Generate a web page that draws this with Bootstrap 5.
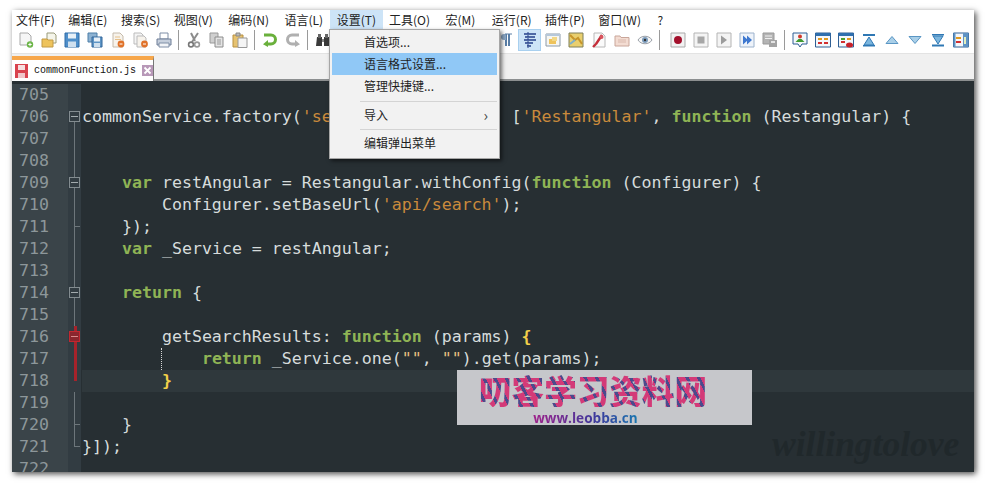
<!DOCTYPE html>
<html lang="zh">
<head>
<meta charset="utf-8">
<title>commonFunction.js</title>
<link rel="stylesheet" href="https://cdn.jsdelivr.net/npm/bootstrap@5.3.0/dist/css/bootstrap.min.css">
<style>
html,body{height:483px;overflow:hidden;background:#fff}
body{padding:10px 11px 11px 12px}
.np-win{position:relative;height:462px;background:#f0f0f0;box-shadow:2px 2px 6px rgba(0,0,0,.7)}
.np-menu{height:19px;background:#fff;padding-left:3px;font:12px/19px "Noto Sans CJK SC","Liberation Sans",sans-serif;color:#222}
.np-menu span{padding:0 7px 0 1px;margin-right:5.5px;white-space:nowrap}
.np-menu span.w2{margin-right:7.5px}
.np-menu span.w3{margin-right:8.5px}
.np-menu span.on{background:#cde4f7;padding:0 7px 0 7px;margin:0 5px 0 -6px}
.np-tools{height:25px;background:#fff;border-bottom:1px solid #e3e3e3;padding-left:2px}
.np-cell{width:23px;height:22px;padding:3px 3.5px;flex:none}
.np-cell svg{display:block;width:16px;height:16px}
.np-cell.on{background:#cde4f7;outline:1px solid #a9d0ef;outline-offset:-1px}
.np-sep{width:7px;height:22px;flex:none;position:relative}
.np-sep::after{content:"";display:block;width:1px;height:20px;margin:1px 0 0 3px;background:#9a9a9a}
.np-sep.wide{width:10px}
.np-tabs{height:27px;background:#f0f0f0;padding-top:2px;border-bottom:2px solid #8c8f90}
.np-tab{width:142px;height:25px;background:#fff;border-right:1px solid #777;border-top:4px solid #f7a74b;padding-left:3px;gap:6px;font:10px/20px "Liberation Mono",monospace;color:#111}
.np-tab svg{flex:none;display:block}
.np-editor{height:391px;padding-top:3px;background:#272f33;overflow:hidden;font:16.6px/22px "DejaVu Sans Mono",monospace;color:#d6dcdc}
.np-line{height:22px;white-space:pre}
.np-num{width:56px;flex:none;background:#3a4449;color:#8d979a;padding-left:7px}
.np-fold{width:13px;flex:none;background:#323c42;position:relative;margin-right:2px}
.np-code{flex:1 1 auto;position:relative;margin-left:-1px}
.np-line.cur .np-code{background:#2f383c}
.k{color:#8fb455;font-weight:700}
.s{color:#c98a3c}
.b{color:#f2cf4a;font-weight:700}
.q{color:#e8c080}
.f-box::before{content:"";position:absolute;left:1px;top:5px;width:11px;height:11px;border:1px solid #838c90;background:#323c42;z-index:1}
.f-box::after{content:"";position:absolute;left:3px;top:10px;width:7px;height:1px;background:#a3abae;z-index:1}
.f-v i{position:absolute;left:6px;top:0;bottom:0;width:1px;background:#6d767b}
.f-top i{top:15px}
.f-tee u{position:absolute;left:6px;top:10px;width:6px;height:1px;background:#6d767b}
.f-end i{bottom:11px}
.f-red i{background:#a6232b;width:3px}
.f-red.f-box::before{background:#8a262e;border-color:#c22730}
.f-red.f-box::after{background:#d88a8a}
.guide{position:absolute;left:79px;top:0;bottom:0;width:0;border-left:1px dotted #d8d8d8}
.np-drop{position:absolute;left:317px;top:19px;width:171px;height:130px;background:#f2f2f2;border:1px solid #a6a6a6;box-shadow:2px 2px 4px rgba(0,0,0,.55);padding:1px 2px;font:12px/22px "Noto Sans CJK SC","Liberation Sans",sans-serif;color:#1f1f1f;z-index:3}
.np-item{height:22px;padding-left:32px;display:flex;justify-content:space-between}
.np-item.sel{background:#90c8f6}
.np-rule{height:1px;background:#d4d4d4;margin:3.5px 0 2px 28px}
.np-arrow{padding-right:9px;font-size:15px;color:#444}
.np-mark{position:absolute;left:445px;top:360px;width:295px;height:55px;background:#c6c7cb;text-align:center;z-index:2}
.np-mark-big{display:block;width:230px;margin:3px 0 0 21px;font:900 32.6px/34px "Noto Sans CJK SC",sans-serif;white-space:nowrap;background:repeating-linear-gradient(62deg,#d33a78 0 7px,#4c4a8c 7px 10px);-webkit-background-clip:text;background-clip:text;color:transparent}
.np-mark-url{display:block;width:107px;margin:3px 0 0 75px;font:700 13.6px/15px "Open Sans",sans-serif;white-space:nowrap;background:linear-gradient(90deg,#a0208a,#3c3a9c 60%,#1878b0);-webkit-background-clip:text;background-clip:text;color:transparent}
.np-sig{position:absolute;left:760px;top:416px;font:italic 700 35.5px/36px "Liberation Serif",serif;color:#20282b;z-index:1}
</style>
</head>
<body>
<svg width="0" height="0" class="d-block" aria-hidden="true">
<defs>
<symbol id="i-new" viewBox="0 0 16 16"><path d="M2 1h8l3 3v9H2z" fill="#f6f6f6" stroke="#a8a8a8"/><circle cx="12" cy="12.500" r="3.200" fill="#6cb548"/><path d="M10.300 12.500h3.400M12 10.800v3.400" stroke="#fff"/></symbol>
<symbol id="i-open" viewBox="0 0 16 16"><path d="M6 1h7l2 2v8H6z" fill="#f5f5ea" stroke="#9a9b7a"/><path d="M1 7h5l1 1h5v7H1z" fill="#eec35c" stroke="#c29a44"/></symbol>
<symbol id="i-save" viewBox="0 0 16 16"><path d="M1 1h14v14H1z" fill="#4f8fca" stroke="#2f6ca8"/><path d="M4 1.500h8v5H4z" fill="#e8f0f7"/><path d="M4 9.500h8v5.500H4z" fill="#cfe0ef"/></symbol>
<symbol id="i-saveall" viewBox="0 0 16 16"><path d="M1 1h9v9H1z" fill="#8db2d2" stroke="#4d7ea8"/><path d="M5 5h10v10H5z" fill="#5e95c6" stroke="#33679a"/><path d="M7 5.500h6v4H7z" fill="#e8f0f7"/><path d="M7 11h6v4H7z" fill="#cfe0ef"/></symbol>
<symbol id="i-close" viewBox="0 0 16 16"><path d="M3 1h7l3 3v11H3z" fill="#f7f3ec" stroke="#c5baaa"/><path d="M5 5h5M5 7.500h6" stroke="#e5c08a"/><circle cx="11" cy="12" r="3.400" fill="#e0722a"/><path d="M9.500 12h3" stroke="#fff"/></symbol>
<symbol id="i-closeall" viewBox="0 0 16 16"><path d="M1 1h7l2 2v9H1z" fill="#f4f4f4" stroke="#bbb"/><path d="M4 4h7l2 2v9H4z" fill="#f7f3ec" stroke="#bbb"/><circle cx="11.500" cy="12" r="3.400" fill="#e0722a"/><path d="M10 12h3" stroke="#fff"/></symbol>
<symbol id="i-print" viewBox="0 0 16 16"><path d="M4 1h8v6H4z" fill="#fff" stroke="#7e8ea6"/><path d="M1 7h14v6H1z" fill="#c6cfdc" stroke="#6d7d96"/><path d="M3 11h10v4H3z" fill="#f2f4f7" stroke="#7e8ea6"/></symbol>
<symbol id="i-cut" viewBox="0 0 16 16"><path d="M12 1L6 10M5 1l4 8" stroke="#8c8c8c" stroke-width="2" fill="none"/><circle cx="5" cy="12.500" r="2.400" fill="none" stroke="#777" stroke-width="1.600"/><circle cx="11" cy="12.500" r="2.400" fill="none" stroke="#999" stroke-width="1.600"/></symbol>
<symbol id="i-copy" viewBox="0 0 16 16"><path d="M1 1h8v10H1z" fill="#cfcfcf" stroke="#999"/><path d="M6 5h8v10H6z" fill="#e4e4e4" stroke="#8c8c8c"/><path d="M8 8h4M8 10h4M8 12h4" stroke="#999"/></symbol>
<symbol id="i-paste" viewBox="0 0 16 16"><path d="M1 3h10v12H1z" fill="#e6c270" stroke="#b89040"/><path d="M4 1h4v3H4z" fill="#bbb" stroke="#888"/><path d="M6 6h9v9.500H6z" fill="#f5f5f5" stroke="#999"/></symbol>
<symbol id="i-undo" viewBox="0 0 16 16"><path d="M2 3h7a4.500 4.500 0 0 1 0 9H5" fill="none" stroke="#6ab03c" stroke-width="3"/><path d="M6 8l-5 4.200L6 15z" fill="#6ab03c"/></symbol>
<symbol id="i-redo" viewBox="0 0 16 16"><path d="M14 3H7a4.500 4.500 0 0 0 0 9h4" fill="none" stroke="#b0b0b0" stroke-width="3"/><path d="M10 8l5 4.200L10 15z" fill="#b0b0b0"/></symbol>
<symbol id="i-find" viewBox="0 0 16 16"><path d="M2 5h5v9H1zM9 5h5l1 9H9z" fill="#3a3a3a"/><path d="M3 2h3v4H3zM10 2h3v4h-3z" fill="#666"/><path d="M7 7h2v3H7z" fill="#888"/></symbol>
<symbol id="i-gray" viewBox="0 0 16 16"><path d="M2 3h12v10H2z" fill="#eee" stroke="#a4a4a4"/><path d="M4 6h8M4 8h8M4 10h8" stroke="#8aa2bc"/></symbol>
<symbol id="i-para" viewBox="0 0 16 16"><path d="M7 2v12M10 2v12" stroke="#5a7ea6" stroke-width="2"/><path d="M7 2H5a3 3 0 0 0 0 6h2" fill="#8aa6c4"/><path d="M6 2h7" stroke="#5a7ea6"/></symbol>
<symbol id="i-indent" viewBox="0 0 16 16"><path d="M6 0v16" stroke="#26408a" stroke-dasharray="2 1"/><path d="M2 2h12M3 5h10M2 8h12M3 11h8M5 14h4" stroke="#26408a" stroke-width="1.500"/></symbol>
<symbol id="i-lang" viewBox="0 0 16 16"><path d="M1 2h14v12H1z" fill="#f6f6f2" stroke="#8c9aa8"/><path d="M1 2h14v2H1z" fill="#b6c8da"/><path d="M4 7h7v5H4z" fill="#eec35c"/><path d="M7 5h5v4H7z" fill="#f2d888"/></symbol>
<symbol id="i-map" viewBox="0 0 16 16"><path d="M1 1h14v14H1z" fill="#e9cf6e" stroke="#7f7f58"/><path d="M2 3l5 5 3-2 4 6" fill="none" stroke="#c8952a" stroke-width="2"/><path d="M2 12l5-4" stroke="#7fb0c8" stroke-width="2"/></symbol>
<symbol id="i-func" viewBox="0 0 16 16"><path d="M3 1h8l3 3v11H3z" fill="#fafafa" stroke="#b8b8b8"/><path d="M11 3L5 12M5 12l-3 3" stroke="#c42e3a" stroke-width="2.400"/><circle cx="10.500" cy="5" r="2" fill="#d8535c"/></symbol>
<symbol id="i-folder" viewBox="0 0 16 16"><path d="M1 4h5l1 1.500h8V14H1z" fill="#f3dcd2" stroke="#c9a69a"/><path d="M4 8h8M4 10h8" stroke="#d9b8ac"/></symbol>
<symbol id="i-eye" viewBox="0 0 16 16"><path d="M1 8c3-5 11-5 14 0-3 5-11 5-14 0z" fill="#f6f6f6" stroke="#9aa0a8"/><circle cx="8" cy="8" r="3" fill="#7c9cbc"/><circle cx="8" cy="8" r="1.200" fill="#333"/></symbol>
<symbol id="i-rec" viewBox="0 0 16 16"><path d="M1 1h14v14H1z" fill="#f2f2f2" stroke="#a9a9a9"/><circle cx="8" cy="8" r="4" fill="#a3102c"/></symbol>
<symbol id="i-stop" viewBox="0 0 16 16"><path d="M1 1h14v14H1z" fill="#f4f4f4" stroke="#b4b4b4"/><path d="M4.500 4.500h7v7h-7z" fill="#a6a6a6"/></symbol>
<symbol id="i-play" viewBox="0 0 16 16"><path d="M1 1h14v14H1z" fill="#f4f4f4" stroke="#b4b4b4"/><path d="M5 3.500l6 4.500-6 4.500z" fill="#9c9c9c"/></symbol>
<symbol id="i-playn" viewBox="0 0 16 16"><path d="M1 1h14v14H1z" fill="#eef3fa" stroke="#9cb2cc"/><path d="M4 3.500L9 8l-5 4.500zM8 3.500L13 8l-5 4.500z" fill="#3e78d0"/></symbol>
<symbol id="i-savem" viewBox="0 0 16 16"><path d="M1 1h11v11H1z" fill="#b4b4b4" stroke="#999"/><path d="M3 4h7M3 6.500h7" stroke="#f0f0f0"/><path d="M7 8h8v7H7z" fill="#a4a4a4"/><path d="M9 9h4v2H9z" fill="#e4e4e4"/></symbol>
<symbol id="i-sync" viewBox="0 0 16 16"><path d="M1 1h14v11h-5l-2 3-2-3H1z" fill="#f4f7fb" stroke="#2f5f94"/><circle cx="8" cy="4.500" r="2" fill="#d03a2c"/><path d="M3.500 10l3-3h3l3 3z" fill="#3f9a32"/></symbol>
<symbol id="i-cmp" viewBox="0 0 16 16"><path d="M.5 1h15v14H.5z" fill="#f4f7fb" stroke="#2f5f94"/><path d="M.5 1h15v3H.5z" fill="#2f6fae"/><path d="M3 7h4M9 7h4" stroke="#e09a20" stroke-width="2"/><path d="M3 11h4M9 11h4" stroke="#d23030" stroke-width="2"/></symbol>
<symbol id="i-cmpx" viewBox="0 0 16 16"><path d="M.5 1h15v14H.5z" fill="#f4f7fb" stroke="#2f5f94"/><path d="M.5 1h15v3H.5z" fill="#2f6fae"/><path d="M3 7h4" stroke="#4ba030" stroke-width="2"/><path d="M9 7h4" stroke="#e09a20" stroke-width="2"/><path d="M3 10h4" stroke="#d23030" stroke-width="2"/><ellipse cx="11.500" cy="13" rx="3.500" ry="2.500" fill="#c8202a"/></symbol>
<symbol id="i-first" viewBox="0 0 16 16"><path d="M2 2h12v2H2z" fill="#2f78b4"/><path d="M8 5L3 13h10z" fill="#7cb6de" stroke="#2f78b4"/><path d="M2 13h12v1.500H2z" fill="#2f78b4"/></symbol>
<symbol id="i-up" viewBox="0 0 16 16"><path d="M8 4.500L2 11.500h12z" fill="#a9cfe8" stroke="#5a96c4"/></symbol>
<symbol id="i-down" viewBox="0 0 16 16"><path d="M8 11.500L2 4.500h12z" fill="#a9cfe8" stroke="#5a96c4"/></symbol>
<symbol id="i-last" viewBox="0 0 16 16"><path d="M2 2h12v1.500H2z" fill="#2f78b4"/><path d="M8 12L3 4h10z" fill="#7cb6de" stroke="#2f78b4"/><path d="M2 12.500h12v2H2z" fill="#2f78b4"/></symbol>
<symbol id="i-panel" viewBox="0 0 16 16"><path d="M.5 1h15v14H.5z" fill="#f4f7fb" stroke="#2f5f94"/><path d="M.5 1h2v14h-2zM10 1h5.500v14H10z" fill="#5f93c4"/><path d="M3 6h5" stroke="#e09a20" stroke-width="2"/><path d="M3 10h5" stroke="#d23030" stroke-width="2"/><path d="M12 5v7" stroke="#e4efc0" stroke-width="2"/></symbol>
</defs>
</svg>
<div class="np-win d-flex flex-column">
  <div class="np-menu d-flex">
    <span>文件(F)</span><span>编辑(E)</span><span>搜索(S)</span><span class="w2">视图(V)</span><span class="w2">编码(N)</span><span>语言(L)</span><span class="on">设置(T)</span><span class="w2">工具(O)</span><span class="w3">宏(M)</span><span>运行(R)</span><span>插件(P)</span><span class="w3">窗口(W)</span><span>?</span>
  </div>
  <div class="np-tools d-flex align-items-start">
    <div class="np-cell"><svg><use href="#i-new"/></svg></div>
    <div class="np-cell"><svg><use href="#i-open"/></svg></div>
    <div class="np-cell"><svg><use href="#i-save"/></svg></div>
    <div class="np-cell"><svg><use href="#i-saveall"/></svg></div>
    <div class="np-cell"><svg><use href="#i-close"/></svg></div>
    <div class="np-cell"><svg><use href="#i-closeall"/></svg></div>
    <div class="np-cell"><svg><use href="#i-print"/></svg></div>
    <div class="np-sep"></div>
    <div class="np-cell"><svg><use href="#i-cut"/></svg></div>
    <div class="np-cell"><svg><use href="#i-copy"/></svg></div>
    <div class="np-cell"><svg><use href="#i-paste"/></svg></div>
    <div class="np-sep"></div>
    <div class="np-cell"><svg><use href="#i-undo"/></svg></div>
    <div class="np-cell"><svg><use href="#i-redo"/></svg></div>
    <div class="np-sep"></div>
    <div class="np-cell"><svg><use href="#i-find"/></svg></div>
    <div class="np-cell"><svg><use href="#i-gray"/></svg></div>
    <div class="np-cell"><svg><use href="#i-gray"/></svg></div>
    <div class="np-cell"><svg><use href="#i-gray"/></svg></div>
    <div class="np-cell"><svg><use href="#i-gray"/></svg></div>
    <div class="np-cell"><svg><use href="#i-gray"/></svg></div>
    <div class="np-cell"><svg><use href="#i-gray"/></svg></div>
    <div class="np-cell"><svg><use href="#i-gray"/></svg></div>
    <div class="np-cell"><svg><use href="#i-para"/></svg></div>
    <div class="np-cell on"><svg><use href="#i-indent"/></svg></div>
    <div class="np-cell"><svg><use href="#i-lang"/></svg></div>
    <div class="np-cell"><svg><use href="#i-map"/></svg></div>
    <div class="np-cell"><svg><use href="#i-func"/></svg></div>
    <div class="np-cell"><svg><use href="#i-folder"/></svg></div>
    <div class="np-cell"><svg><use href="#i-eye"/></svg></div>
    <div class="np-sep wide"></div>
    <div class="np-cell"><svg><use href="#i-rec"/></svg></div>
    <div class="np-cell"><svg><use href="#i-stop"/></svg></div>
    <div class="np-cell"><svg><use href="#i-play"/></svg></div>
    <div class="np-cell"><svg><use href="#i-playn"/></svg></div>
    <div class="np-cell"><svg><use href="#i-savem"/></svg></div>
    <div class="np-sep"></div>
    <div class="np-cell"><svg><use href="#i-sync"/></svg></div>
    <div class="np-cell"><svg><use href="#i-cmp"/></svg></div>
    <div class="np-cell"><svg><use href="#i-cmpx"/></svg></div>
    <div class="np-cell"><svg><use href="#i-first"/></svg></div>
    <div class="np-cell"><svg><use href="#i-up"/></svg></div>
    <div class="np-cell"><svg><use href="#i-down"/></svg></div>
    <div class="np-cell"><svg><use href="#i-last"/></svg></div>
    <div class="np-cell"><svg><use href="#i-panel"/></svg></div>
  </div>
  <div class="np-tabs d-flex">
    <div class="np-tab d-flex align-items-center">
      <svg width="13" height="14" viewBox="0 0 13 14"><path d="M0 0h13v14H0z" fill="#d9434e"/><path d="M3 1h7v5H3z" fill="#f6dfe0"/><path d="M3 9h7v5H3z" fill="#f0c6c9"/></svg>
      <span class="flex-grow-1">commonFunction.js</span>
      <svg class="me-1" width="11" height="11" viewBox="0 0 11 11"><path d="M0 0h11v11H0z" fill="#b898b8"/><path d="M2.500 2.500l6 6M8.500 2.500l-6 6" stroke="#fff" stroke-width="1.800"/></svg>
    </div>
  </div>
  <div class="np-editor">
    <div class="np-line d-flex"><div class="np-num">705</div><div class="np-fold"></div><div class="np-code"></div></div>
    <div class="np-line d-flex"><div class="np-num">706</div><div class="np-fold f-box f-v f-top"><i></i></div><div class="np-code">commonService.factory(<span class="s">'searchDataService'</span>, [<span class="s">'Restangular'</span>, <span class="k">function</span> (Restangular) {</div></div>
    <div class="np-line d-flex"><div class="np-num">707</div><div class="np-fold f-v"><i></i></div><div class="np-code"></div></div>
    <div class="np-line d-flex"><div class="np-num">708</div><div class="np-fold f-v"><i></i></div><div class="np-code"></div></div>
    <div class="np-line d-flex"><div class="np-num">709</div><div class="np-fold f-box f-v"><i></i></div><div class="np-code">    <span class="k">var</span> restAngular = Restangular.withConfig(<span class="k">function</span> (Configurer) {</div></div>
    <div class="np-line d-flex"><div class="np-num">710</div><div class="np-fold f-v"><i></i></div><div class="np-code">        Configurer.setBaseUrl(<span class="s">'api/search'</span>);</div></div>
    <div class="np-line d-flex"><div class="np-num">711</div><div class="np-fold f-v f-tee"><i></i><u></u></div><div class="np-code">    });</div></div>
    <div class="np-line d-flex"><div class="np-num">712</div><div class="np-fold f-v"><i></i></div><div class="np-code">    <span class="k">var</span> _Service = restAngular;</div></div>
    <div class="np-line d-flex"><div class="np-num">713</div><div class="np-fold f-v"><i></i></div><div class="np-code"></div></div>
    <div class="np-line d-flex"><div class="np-num">714</div><div class="np-fold f-box f-v"><i></i></div><div class="np-code">    <span class="k">return</span> {</div></div>
    <div class="np-line d-flex"><div class="np-num">715</div><div class="np-fold f-v"><i></i></div><div class="np-code"></div></div>
    <div class="np-line d-flex"><div class="np-num">716</div><div class="np-fold f-box f-v f-red"><i></i></div><div class="np-code">        getSearchResults: <span class="k">function</span> (params) <span class="b">{</span></div></div>
    <div class="np-line d-flex"><div class="np-num">717</div><div class="np-fold f-v f-red"><i></i></div><div class="np-code"><div class="guide"></div>            <span class="k">return</span> _Service.one(<span class="q">""</span>, <span class="q">""</span>).get(params);</div></div>
    <div class="np-line d-flex cur"><div class="np-num">718</div><div class="np-fold f-v f-red f-end"><i></i></div><div class="np-code">        <span class="b">}</span></div></div>
    <div class="np-line d-flex"><div class="np-num">719</div><div class="np-fold f-v"><i></i></div><div class="np-code"></div></div>
    <div class="np-line d-flex"><div class="np-num">720</div><div class="np-fold f-v f-tee"><i></i><u></u></div><div class="np-code">    }</div></div>
    <div class="np-line d-flex"><div class="np-num">721</div><div class="np-fold f-v f-tee f-end"><i></i><u></u></div><div class="np-code">}]);</div></div>
    <div class="np-line d-flex"><div class="np-num">722</div><div class="np-fold"></div><div class="np-code"></div></div>
  </div>
  <div class="np-drop">
    <div class="np-item"><span>首选项...</span></div>
    <div class="np-item sel"><span>语言格式设置...</span></div>
    <div class="np-item"><span>管理快捷键...</span></div>
    <div class="np-rule"></div>
    <div class="np-item"><span>导入</span><span class="np-arrow">&#8250;</span></div>
    <div class="np-rule"></div>
    <div class="np-item"><span>编辑弹出菜单</span></div>
  </div>
  <div class="np-mark">
    <span class="np-mark-big">叨客学习资料网</span>
    <span class="np-mark-url">www.leobba.cn</span>
  </div>
  <div class="np-sig">willingtolove</div>
</div>
<script src="https://cdn.jsdelivr.net/npm/bootstrap@5.3.0/dist/js/bootstrap.bundle.min.js"></script>
</body>
</html>
